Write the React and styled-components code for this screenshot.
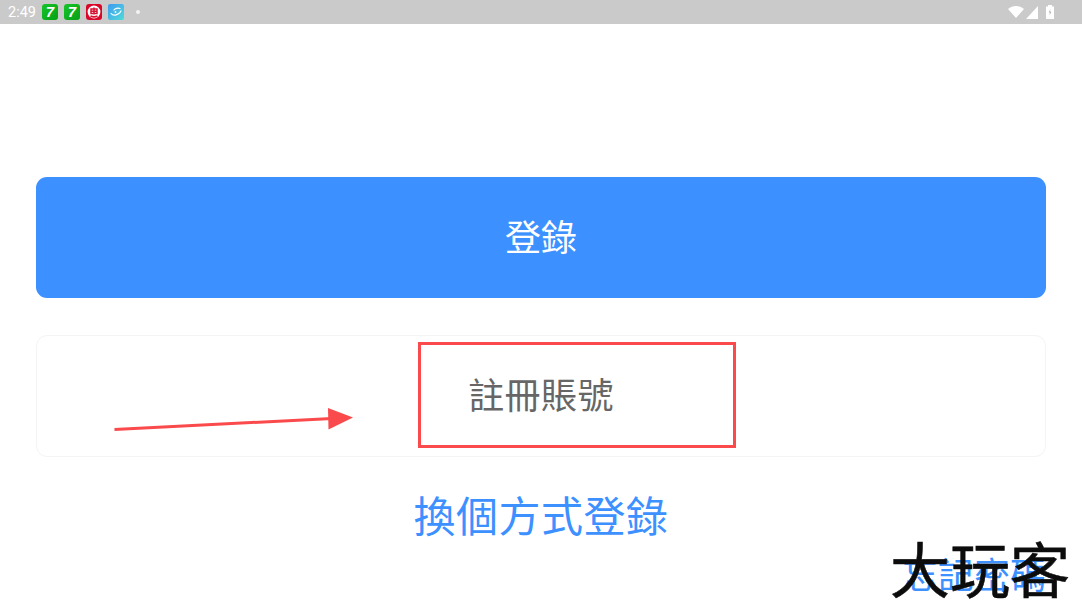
import React from "react";
import styled, { createGlobalStyle } from "styled-components";

const GlobalStyle = createGlobalStyle`
  html, body {
    margin: 0;
    padding: 0;
    background: #ffffff;
    overflow: hidden;
  }
  * { box-sizing: border-box; }
`;

const CJK = `"Noto Sans CJK TC", "Noto Sans CJK SC", "Noto Sans", sans-serif`;

const Screen = styled.div`
  position: relative;
  width: 1082px;
  height: 609px;
  overflow: hidden;
  background: #ffffff;
  font-family: ${CJK};
`;

const StatusBar = styled.div`
  height: 24px;
  background: #cacaca;
  display: flex;
  align-items: center;
  justify-content: space-between;
  padding: 0 28px 0 8px;
`;

const StatusLeft = styled.div`
  display: flex;
  align-items: center;
`;

const StatusTime = styled.span`
  font-family: Roboto, sans-serif;
  font-size: 14.5px;
  color: #ffffff;
  width: 34px;
`;

const AppIcons = styled.div`
  display: flex;
  align-items: center;
  gap: 6px;
`;

const SevenIcon = styled.div`
  width: 16px;
  height: 16px;
  border-radius: 3px;
  background: linear-gradient(135deg, #18c428, #06a015);
  color: #ffffff;
  font-family: "Liberation Sans", sans-serif;
  font-weight: 700;
  font-style: italic;
  font-size: 15px;
  line-height: 16px;
  text-align: center;
`;

const NotifyDot = styled.div`
  width: 4px;
  height: 4px;
  border-radius: 50%;
  background: #f4f4f4;
  margin-left: 12px;
`;

const StatusRight = styled.div`
  display: flex;
  align-items: center;
`;

const WifiSvg = styled.svg`
  margin-right: 2px;
`;

const SignalSvg = styled.svg`
  margin-right: 8px;
`;

const Main = styled.main`
  display: flex;
  flex-direction: column;
  align-items: stretch;
  padding: 153px 36px 0 36px;
`;

const LoginButton = styled.div`
  height: 121px;
  padding-bottom: 6px;
  border-radius: 11px;
  background: #3d90ff;
  color: #ffffff;
  font-size: 36px;
  display: flex;
  align-items: center;
  justify-content: center;
`;

const RegisterButton = styled.div`
  height: 122px;
  margin-top: 37px;
  padding-bottom: 7px;
  border: 1px solid #f4f4f4;
  border-radius: 11px;
  background: #ffffff;
  color: #666666;
  font-size: 36px;
  letter-spacing: 0.4px;
  display: flex;
  align-items: center;
  justify-content: center;
`;

const SwitchLink = styled.div`
  margin-top: 31px;
  height: 52px;
  line-height: 52px;
  text-align: center;
  font-size: 42px;
  letter-spacing: 0.5px;
  color: #3d90ff;
`;

const ForgotLink = styled.div`
  margin-top: 7px;
  height: 52px;
  line-height: 52px;
  text-align: right;
  font-size: 36px;
  color: #3d90ff;
`;

// red annotations drawn on top of the screenshot
const HighlightBox = styled.div`
  position: absolute;
  left: 418px;
  top: 342px;
  width: 318px;
  height: 106px;
  border: 3px solid #fb4a4c;
`;

const ArrowMark = styled.svg`
  position: absolute;
  left: 110px;
  top: 400px;
`;

const Watermark = styled.div`
  position: absolute;
  left: 890px;
  top: 527px;
  font-family: ${CJK};
  font-size: 60px;
  line-height: 80px;
  font-weight: 400;
  color: #0c0c0c;
  -webkit-text-stroke: 0.6px #0c0c0c;
  white-space: nowrap;
`;

const PoiIcon = () => (
  <svg width="16" height="16" viewBox="0 0 16 16">
    <rect width="16" height="16" rx="3" fill="#d9062a" />
    <circle cx="8" cy="8" r="6.4" fill="#ffffff" />
    <path d="M5 5h6v4.5H5zM5 7.2h6M8 3.5v7M4.5 12c2 1 5 1 7 0" fill="none" stroke="#d8102f" strokeWidth="1.5" />
  </svg>
);

const FishIcon = () => (
  <svg width="16" height="16" viewBox="0 0 16 16">
    <defs>
      <linearGradient id="fishBg" x1="0" y1="0" x2="1" y2="1">
        <stop offset="0" stopColor="#3f9bf0" />
        <stop offset="1" stopColor="#4fdcd8" />
      </linearGradient>
    </defs>
    <rect width="16" height="16" rx="2" fill="url(#fishBg)" />
    <path d="M3 9.5c2 2.5 7 2.5 10-2.5M6 6c1-1.5 4-2.5 6-1.5" fill="none" stroke="#ffffff" strokeWidth="1.2" strokeLinecap="round" />
    <circle cx="7.5" cy="8" r="0.9" fill="#ffffff" />
  </svg>
);

const WifiIcon = () => (
  <WifiSvg width="16" height="12" viewBox="0 0 16 12">
    <path d="M0 3C4.6-.9 11.4-.9 16 3L8 12z" fill="#ffffff" />
  </WifiSvg>
);

const SignalIcon = () => (
  <SignalSvg width="12" height="13" viewBox="0 0 12 13">
    <path d="M12 0v13H0z" fill="#ffffff" />
  </SignalSvg>
);

const BatteryIcon = () => (
  <svg width="8" height="14" viewBox="0 0 8 14">
    <path d="M2 0h4v1.5h2V14H0V1.5h2z" fill="#ffffff" />
    <path d="M4.5 4 2.8 7.6H4L3.5 10.5l1.8-3.7H4z" fill="#a8a8a8" />
  </svg>
);

export default function App() {
  return (
    <Screen>
      <GlobalStyle />
      <StatusBar>
        <StatusLeft>
          <StatusTime>2:49</StatusTime>
          <AppIcons>
            <SevenIcon>7</SevenIcon>
            <SevenIcon>7</SevenIcon>
            <PoiIcon />
            <FishIcon />
          </AppIcons>
          <NotifyDot />
        </StatusLeft>
        <StatusRight>
          <WifiIcon />
          <SignalIcon />
          <BatteryIcon />
        </StatusRight>
      </StatusBar>

      <Main>
        <LoginButton>登錄</LoginButton>
        <RegisterButton>註冊賬號</RegisterButton>
        <SwitchLink>換個方式登錄</SwitchLink>
        <ForgotLink>忘記密碼</ForgotLink>
      </Main>

      <HighlightBox />
      <ArrowMark width="250" height="40" viewBox="0 0 250 40">
        <line x1="4.5" y1="29.5" x2="222" y2="18.5" stroke="#fb4a4c" strokeWidth="3" />
        <path d="M218 8l25 9.5-24.5 12z" fill="#fb4a4c" />
      </ArrowMark>
      <Watermark>大玩客</Watermark>
    </Screen>
  );
}
